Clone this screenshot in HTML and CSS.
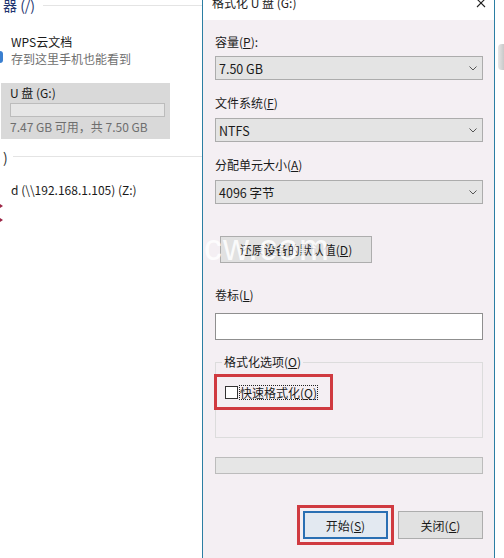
FILE: index.html
```html
<!DOCTYPE html>
<html lang="zh-CN">
<head>
<meta charset="utf-8">
<title>格式化 U 盘 (G:)</title>
<link rel="stylesheet" href="styles.css">
</head>
<body>
<div class="screen">
  <aside class="explorer">
    <div class="group-head"><span class="gh-text">器 (/)</span><span class="gh-line"></span></div>
    <div class="item wps">
      <span class="mark-blue"></span>
      <div class="name">WPS云文档</div>
      <div class="sub">存到这里手机也能看到</div>
    </div>
    <div class="drive">
      <div class="name">U 盘 (G:)</div>
      <div class="dbar"></div>
      <div class="sub">7.47 GB 可用，共 7.50 GB</div>
    </div>
    <div class="group-head second"><span class="gh-text">)</span><span class="gh-line"></span></div>
    <div class="item net">
      <div class="name">d (\\192.168.1.105) (Z:)</div>
      <span class="mark-red"></span>
      <span class="mark-red"></span>
    </div>
  </aside>

  <section class="dialog">
    <div class="titlebar">
      <span class="title">格式化 U 盘 (G:)</span>
      <svg class="close" width="10" height="10" viewBox="0 0 10 10"><path d="M1 1 L9 9 M9 1 L1 9" stroke="#222" stroke-width="1.1" fill="none"/></svg>
    </div>
    <div class="body">
      <div class="label first">容量(<u>P</u>):</div>
      <div class="select"><span>7.50 GB</span><svg width="8" height="5" viewBox="0 0 8 5"><path d="M0.5 0.5 L4 4 L7.5 0.5" stroke="#555" fill="none"/></svg></div>
      <div class="label">文件系统(<u>F</u>)</div>
      <div class="select s2"><span>NTFS</span><svg width="8" height="5" viewBox="0 0 8 5"><path d="M0.5 0.5 L4 4 L7.5 0.5" stroke="#555" fill="none"/></svg></div>
      <div class="label">分配单元大小(<u>A</u>)</div>
      <div class="select s2"><span>4096 字节</span><svg width="8" height="5" viewBox="0 0 8 5"><path d="M0.5 0.5 L4 4 L7.5 0.5" stroke="#555" fill="none"/></svg></div>
      <div class="restore-row">
        <button class="btn restore">还原设备的默认值(<u>D</u>)</button>
        <span class="watermark">cw.com</span>
      </div>
      <div class="label l4">卷标(<u>L</u>)</div>
      <div class="textbox"></div>
      <div class="groupbox">
        <span class="legend">格式化选项(<u>O</u>)</span>
        <div class="check-row">
          <span class="checkbox"></span>
          <span class="check-label">快速格式化(<u>Q</u>)</span>
        </div>
        <span class="highlight hl-check"></span>
      </div>
      <div class="progress"></div>
      <div class="buttons">
        <div class="btn-wrap">
          <button class="btn primary">开始(<u>S</u>)</button>
          <span class="highlight hl-start"></span>
        </div>
        <button class="btn close-btn">关闭(<u>C</u>)</button>
      </div>
    </div>
  </section>

  <div class="edge"><span class="edge-blob"></span></div>
</div>
</body>
</html>
```

FILE: styles.css
```css
* { box-sizing: border-box; }
html, body { margin: 0; padding: 0; }
body {
  width: 504px;
  height: 558px;
  overflow: hidden;
  background: #fff;
  font-family: "Noto Sans CJK SC", "Noto Sans", sans-serif;
  font-size: 12px;
  color: #1a1a1a;
}
u { text-decoration: underline; text-underline-offset: 1px; }

.screen { display: flex; width: 504px; height: 558px; }

/* ---------- explorer ---------- */
.explorer {
  width: 202px;
  flex: none;
  background: #fff;
  overflow: hidden;
}
.group-head {
  display: flex;
  align-items: center;
  height: 20px;
  margin-top: -5px;
  padding-left: 3px;
}
.gh-text { font-size: 14px; color: #1f3570; line-height: 20px; }
.gh-line { flex: 1; height: 1px; background: #e4e4e4; margin-left: 8px; }
.group-head.second { margin-top: 10px; height: 16px; }
.group-head.second .gh-text { color: #333; line-height: 16px; }
.group-head.second .gh-line { margin-left: 5px; margin-top: -2px; }

.item { position: relative; padding-left: 11px; }
.name { line-height: 17px; color: #1a1a1a; }
.sub { line-height: 17px; color: #707070; }
.wps { margin-top: 18px; }
.mark-blue {
  position: absolute; left: 0; top: 18px;
  width: 3px; height: 12px; border-radius: 0 3px 3px 0;
  background: #3a7fd0;
}

.drive {
  margin-top: 16px;
  margin-left: 1px;
  width: 169px;
  height: 56px;
  background: #d9d9d9;
  padding: 2px 0 0 9px;
}
.drive .name { line-height: 16px; }
.dbar {
  margin-top: 2px;
  width: 155px; height: 14px;
  background: #e6e6e6;
  border: 1px solid #bcbcbc;
}
.drive .sub { margin-top: 2px; line-height: 16px; color: #6e6e6e; }

.net { margin-top: 17px; }
.net .name { line-height: 16px; }
.mark-red {
  display: block;
  margin-left: -11px;
  margin-top: 6px;
  width: 0; height: 0;
  border-top: 2px solid transparent;
  border-bottom: 2px solid transparent;
  border-left: 3px solid #9c2545;
}
.mark-red + .mark-red { margin-top: 10px; }

/* ---------- dialog ---------- */
.dialog {
  width: 293px;
  flex: none;
  border-left: 1px solid #2b7ea3;
  border-right: 1px solid #2b7ea3;
  background: #f4eff3;
  display: flex;
  flex-direction: column;
}
.titlebar {
  height: 20px;
  background: #fff;
  display: flex;
  justify-content: space-between;
  align-items: flex-start;
  padding: 0 8px 0 9px;
}
.title { line-height: 16px; margin-top: -5px; color: #222; }
.close { margin-top: -2px; }

.body { padding: 14px 11px 0 12px; }
.label { line-height: 16px; margin-top: 15px; }
.label.first { margin-top: 0; }
.select {
  margin-top: 6px;
  height: 24px;
  background: #e4e4e4;
  border: 1px solid #acacac;
  display: flex;
  align-items: center;
  justify-content: space-between;
  padding: 0 5px 0 3px;
  font-size: 12.5px;
}
.select.s2 { margin-top: 7px; }
.select svg { display: block; }

.restore-row { position: relative; margin-top: 32px; height: 27px; }
.btn {
  font-family: inherit;
  font-size: 12px;
  color: #1a1a1a;
  background: #e1e1e1;
  border: 1px solid #adadad;
  padding: 0;
  margin: 0;
  display: flex;
  align-items: center;
  justify-content: center;
}
.restore { margin-left: 5px; width: 152px; height: 27px; }
.watermark {
  position: absolute;
  left: -11px; top: -6px;
  font-family: "Liberation Sans", sans-serif;
  font-size: 36px;
  line-height: 36px;
  color: rgba(255,255,255,0.85);
  pointer-events: none;
  letter-spacing: 1px;
}

.label.l4 { margin-top: 24px; }
.textbox {
  margin-top: 10px;
  height: 27px;
  background: #fff;
  border: 1px solid #8f8f8f;
}

.groupbox {
  position: relative;
  margin-top: 22px;
  height: 76px;
  border: 1px solid #dcdcdc;
}
.legend {
  display: block;
  width: fit-content;
  margin-top: -9px;
  margin-left: 6px;
  padding: 0 2px;
  line-height: 16px;
  background: #f4eff3;
}
.check-row {
  display: flex;
  align-items: center;
  margin-top: 15px;
  margin-left: 9px;
}
.checkbox {
  width: 13px; height: 13px;
  background: #fff;
  border: 1px solid #333;
  flex: none;
}
.check-label {
  margin-left: 1px;
  padding: 0 1px;
  line-height: 15px;
  outline: 1px dotted #222;
  outline-offset: -1px;
}
.highlight {
  position: absolute;
  border: 3px solid #d03a40;
  pointer-events: none;
}
.hl-check { left: -2px; top: 11px; width: 119px; height: 36px; }

.progress {
  margin-top: 19px;
  height: 17px;
  background: #e6e6e6;
  border: 1px solid #bcbcbc;
}

.buttons {
  margin-top: 37px;
  display: flex;
  justify-content: flex-end;
  gap: 10px;
}
.btn-wrap { position: relative; }
.primary {
  width: 85px; height: 28px;
  background: #e3e9f1;
  border: 2px solid #2a6fb3;
}
.hl-start { left: -6px; top: -6px; right: -6px; bottom: -6px; }
.close-btn { width: 85px; height: 28px; }

/* ---------- right edge ---------- */
.edge { flex: 1; background: #fff; position: relative; }
.edge-blob {
  position: absolute;
  left: 3px; top: 44px;
  width: 6px; height: 26px;
  background: linear-gradient(90deg, #e6e6e6, #c9c9c9);
  border-radius: 4px 0 0 4px;
}
```
